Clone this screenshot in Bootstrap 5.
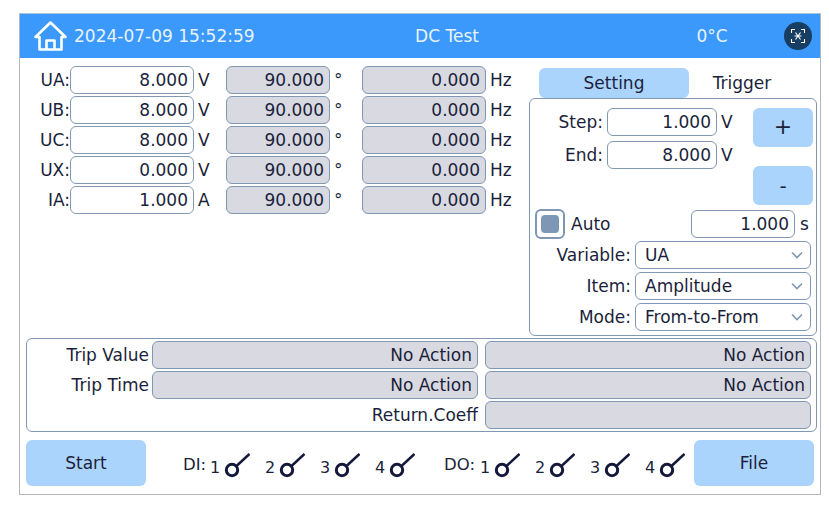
<!DOCTYPE html>
<html lang="en">
<head>
<meta charset="utf-8">
<title>DC Test</title>
<link href="https://cdn.jsdelivr.net/npm/bootstrap@5.3.0/dist/css/bootstrap.min.css" rel="stylesheet">
<style>
html,body{height:100%;margin:0;background:#fff}
body{font-family:"DejaVu Sans",sans-serif;font-size:17px;line-height:1.2;color:#1b1f3b;overflow:hidden}
.stage{padding:13px 8px 0 19px}
.frame{width:802px;height:482px;border:1px solid #b4b8bc;border-top-color:#a9c4dc}
.topbar{height:44px;background:#3a99fb;color:#e8f3ff;padding:0 8px 0 14px}
.when{width:310px;padding-left:6px}
.ttl{width:138px;text-align:center}
.temp{width:80px;margin-left:156px;text-align:center}
.fsbtn{width:28px;height:28px;border-radius:50%;background:#173d63;margin-left:auto}
.main{height:280px}
.left{width:508px;padding-top:8px}
.vrow{height:28px;margin-bottom:2px}
.lab{width:50px;text-align:right}
.fld{height:28px;border:1px solid #8098b3;border-radius:6px;background:#fff;text-align:right;padding:0 5px;line-height:26px;overflow:hidden;white-space:nowrap}
.ro{background:#d8d9e1}
.w124{width:124px}.w104{width:104px}.w110{width:110px}
.unit{width:32px;padding-left:4px}
.right{width:288px;margin-left:1px;padding-top:10px}
.tabs{height:30px;padding-left:10px}
.tabon,.taboff{height:30px;line-height:30px;text-align:center}
.tabon{width:150px;background:#abd4fd;border-radius:6px}
.taboff{width:106px}
.setpanel{width:288px;height:238px;border:1px solid #8098b3;border-radius:6px;padding:9px 5px 0 5px}
.toprow{height:101px}
.pl{width:72px;text-align:right;padding-right:4px}
.pbtns{margin-left:4px}
.pbtn{width:60px;height:39px;background:#abd4fd;border-radius:6px;display:flex;align-items:center;justify-content:center;border:0;color:inherit;padding:0;font-size:22px}
.pbtn+.pbtn{margin-top:19px;font-size:20px}
.sp5{height:28px;margin-bottom:5px}
.autorow{height:30px}
.chk{width:30px;height:30px;border:2px solid #7e97b4;border-radius:6px;display:flex;align-items:center;justify-content:center;background:#fff;padding:0}
.chk span{display:block;width:18px;height:18px;border-radius:4px;background:#7e97b4}
.autolab{margin-left:6px;flex:1 1 auto}
.sfx{width:16px;padding-left:5px}
.selrow{height:28px;margin-top:3px}
.selrow.first{margin-top:2px}
.sellab{width:100px;text-align:right;padding-right:4px}
.form-select.picker{width:176px;height:28px;border:1px solid #8098b3;border-radius:6px;padding:0 28px 0 9px;font-size:17px;line-height:26px;color:inherit;background-color:#fff;background-size:12px 8px;background-position:right 7px center;background-image:url("data:image/svg+xml,%3csvg xmlns='http://www.w3.org/2000/svg' viewBox='0 0 12 8'%3e%3cpath fill='none' stroke='%238098b3' stroke-width='1.600' d='M1 1.500l5 5 5-5'/%3e%3c/svg%3e")}
.tripbox{margin:0 3px 0 6px;height:94px;border:1px solid #8098b3;border-radius:6px;padding:2px 5px 0 0}
.triprow{height:28px;margin-bottom:2px}
.triplab{width:125px;text-align:right;padding-right:3px;flex:none}
.retlab{width:451px;text-align:right;flex:none}
.w326{width:326px;flex:none}.gap7{margin-left:7px}
.bottom{margin:8px 0 0 6px;height:46px}
.bigbtn{width:120px;height:46px;background:#abd4fd;border-radius:6px;border:0;color:inherit;padding:0;font-size:17px}
.dio{margin-left:37px;width:511px;padding-top:13px;font-size:16px}
.grp{gap:14px;line-height:1}
.nm{width:27px;margin-top:4px;font-size:16.500px;line-height:1}
.nmw{width:36px;margin-left:28px}
.it{width:41px;flex:none}
.it span{display:block;width:14px;flex:none;margin-top:7px}
.it svg{flex:none}
.swc{fill:none;stroke:#14183a;stroke-width:3}
.swl{stroke:#14183a;stroke-width:2.500;fill:none}
</style>
</head>
<body>
<div class="stage">
<div class="frame">
  <div class="topbar d-flex align-items-center">
    <svg width="34" height="32" viewBox="0 0 34 32" fill="none" stroke="#fff" stroke-width="2.600" stroke-linejoin="round"><path d="M1.500 17L16.500 2.500 31.500 17H27.500V29.500H5.500V17Z"/><path d="M12.500 29.500V20.500H20.500V29.500"/></svg>
    <div class="when">2024-07-09 15:52:59</div>
    <div class="ttl">DC Test</div>
    <div class="temp">0°C</div>
    <div class="fsbtn d-flex align-items-center justify-content-center">
      <svg width="16" height="16" viewBox="0 0 16 16" fill="none" stroke="#fff" stroke-width="1.100"><path d="M1.500 5V1.500H5M11 1.500h3.500V5M1.500 11v3.500H5M11 14.500h3.500V11"/><path d="M5.500 4.500l5 7M10.500 4.500l-5 7M4.500 8h7"/></svg>
    </div>
  </div>
  <div class="main d-flex">
    <div class="left">
      <div class="vrow d-flex align-items-center"><div class="lab">UA:</div><div class="fld w124">8.000</div><div class="unit">V</div><div class="fld ro w104">90.000</div><div class="unit">°</div><div class="fld ro w124">0.000</div><div class="unit">Hz</div></div>
      <div class="vrow d-flex align-items-center"><div class="lab">UB:</div><div class="fld w124">8.000</div><div class="unit">V</div><div class="fld ro w104">90.000</div><div class="unit">°</div><div class="fld ro w124">0.000</div><div class="unit">Hz</div></div>
      <div class="vrow d-flex align-items-center"><div class="lab">UC:</div><div class="fld w124">8.000</div><div class="unit">V</div><div class="fld ro w104">90.000</div><div class="unit">°</div><div class="fld ro w124">0.000</div><div class="unit">Hz</div></div>
      <div class="vrow d-flex align-items-center"><div class="lab">UX:</div><div class="fld w124">0.000</div><div class="unit">V</div><div class="fld ro w104">90.000</div><div class="unit">°</div><div class="fld ro w124">0.000</div><div class="unit">Hz</div></div>
      <div class="vrow d-flex align-items-center"><div class="lab">IA:</div><div class="fld w124">1.000</div><div class="unit">A</div><div class="fld ro w104">90.000</div><div class="unit">°</div><div class="fld ro w124">0.000</div><div class="unit">Hz</div></div>
    </div>
    <div class="right">
      <div class="tabs d-flex"><div class="tabon">Setting</div><div class="taboff">Trigger</div></div>
      <div class="setpanel">
        <div class="toprow d-flex">
          <div>
            <div class="sp5 d-flex align-items-center"><div class="pl">Step:</div><div class="fld w110">1.000</div><div class="unit">V</div></div>
            <div class="d-flex align-items-center"><div class="pl">End:</div><div class="fld w110">8.000</div><div class="unit">V</div></div>
          </div>
          <div class="pbtns">
            <button class="pbtn" type="button">+</button>
            <button class="pbtn" type="button">-</button>
          </div>
        </div>
        <div class="d-flex align-items-center autorow">
          <button class="chk" type="button" aria-label="Auto"><span></span></button>
          <div class="autolab">Auto</div>
          <div class="fld w104">1.000</div><div class="sfx">s</div>
        </div>
        <div class="selrow first d-flex align-items-center"><div class="sellab">Variable:</div><select class="form-select picker"><option>UA</option></select></div>
        <div class="selrow d-flex align-items-center"><div class="sellab">Item:</div><select class="form-select picker"><option>Amplitude</option></select></div>
        <div class="selrow d-flex align-items-center"><div class="sellab">Mode:</div><select class="form-select picker"><option>From-to-From</option></select></div>
      </div>
    </div>
  </div>
  <div class="tripbox">
    <div class="triprow d-flex align-items-center"><div class="triplab">Trip Value</div><div class="fld ro w326">No Action</div><div class="fld ro w326 gap7">No Action</div></div>
    <div class="triprow d-flex align-items-center"><div class="triplab">Trip Time</div><div class="fld ro w326">No Action</div><div class="fld ro w326 gap7">No Action</div></div>
    <div class="triprow d-flex align-items-center"><div class="retlab">Return.Coeff</div><div class="fld ro w326 gap7"></div></div>
  </div>
  <div class="bottom d-flex">
    <button class="bigbtn" type="button">Start</button>
    <div class="dio d-flex">
      <div class="nm">DI:</div>
      <div class="grp d-flex">
        <div class="it d-flex"><span>1</span><svg width="26" height="25" viewBox="0 0 26 25"><circle class="swc" cx="8" cy="17" r="5.700"/><path class="swl" d="M12.500 13L25.500 1"/></svg></div>
        <div class="it d-flex"><span>2</span><svg width="26" height="25" viewBox="0 0 26 25"><circle class="swc" cx="8" cy="17" r="5.700"/><path class="swl" d="M12.500 13L25.500 1"/></svg></div>
        <div class="it d-flex"><span>3</span><svg width="26" height="25" viewBox="0 0 26 25"><circle class="swc" cx="8" cy="17" r="5.700"/><path class="swl" d="M12.500 13L25.500 1"/></svg></div>
        <div class="it d-flex"><span>4</span><svg width="26" height="25" viewBox="0 0 26 25"><circle class="swc" cx="8" cy="17" r="5.700"/><path class="swl" d="M12.500 13L25.500 1"/></svg></div>
      </div>
      <div class="nm nmw">DO:</div>
      <div class="grp d-flex">
        <div class="it d-flex"><span>1</span><svg width="26" height="25" viewBox="0 0 26 25"><circle class="swc" cx="8" cy="17" r="5.700"/><path class="swl" d="M12.500 13L25.500 1"/></svg></div>
        <div class="it d-flex"><span>2</span><svg width="26" height="25" viewBox="0 0 26 25"><circle class="swc" cx="8" cy="17" r="5.700"/><path class="swl" d="M12.500 13L25.500 1"/></svg></div>
        <div class="it d-flex"><span>3</span><svg width="26" height="25" viewBox="0 0 26 25"><circle class="swc" cx="8" cy="17" r="5.700"/><path class="swl" d="M12.500 13L25.500 1"/></svg></div>
        <div class="it d-flex"><span>4</span><svg width="26" height="25" viewBox="0 0 26 25"><circle class="swc" cx="8" cy="17" r="5.700"/><path class="swl" d="M12.500 13L25.500 1"/></svg></div>
      </div>
    </div>
    <button class="bigbtn" type="button">File</button>
  </div>
</div>
</div>
</body>
</html>
